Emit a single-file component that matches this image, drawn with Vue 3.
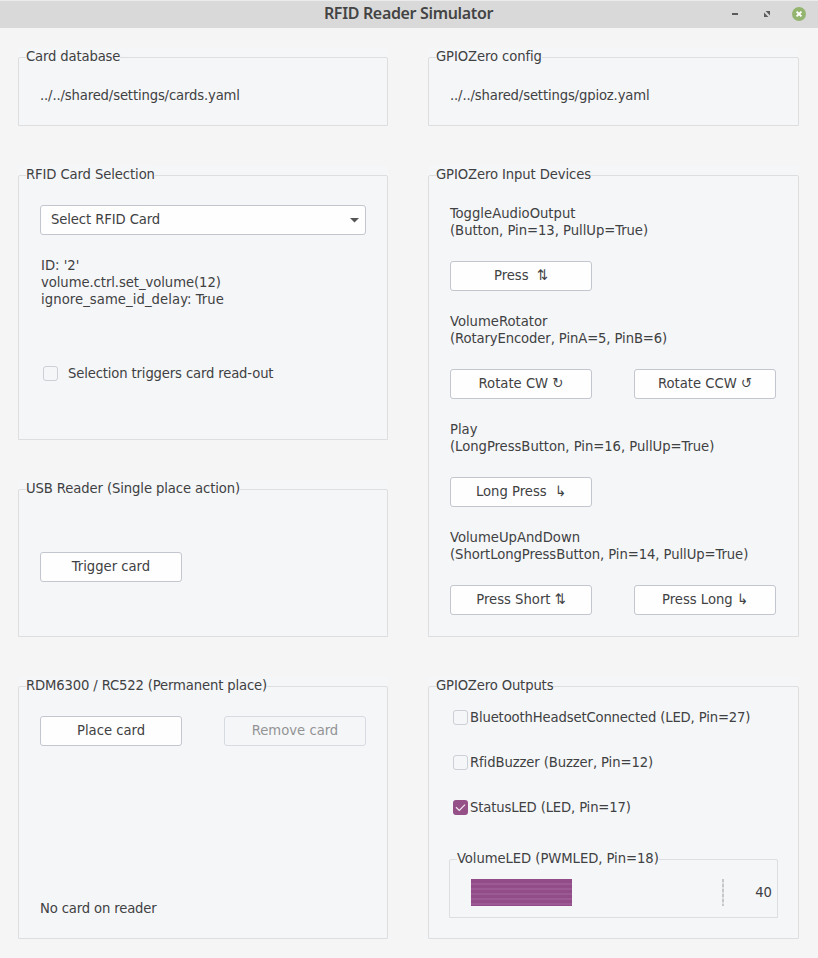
<script setup>
import { ref } from 'vue'

const devices = [
  { name: 'ToggleAudioOutput', info: '(Button, Pin=13, PullUp=True)', fit: 'slight', actions: ['Press  ⇅'] },
  { name: 'VolumeRotator', info: '(RotaryEncoder, PinA=5, PinB=6)', fit: 'tight', actions: ['Rotate CW ↻', 'Rotate CCW ↺'] },
  { name: 'Play', info: '(LongPressButton, Pin=16, PullUp=True)', fit: 'slight', actions: ['Long Press  ↳'] },
  { name: 'VolumeUpAndDown', info: '(ShortLongPressButton, Pin=14, PullUp=True)', fit: 'snug', actions: ['Press Short ⇅', 'Press Long ↳'] },
]
const outputs = ref([
  { label: 'BluetoothHeadsetConnected (LED, Pin=27)', fit: 'tighter', on: false },
  { label: 'RfidBuzzer (Buzzer, Pin=12)', fit: 'tight', on: false },
  { label: 'StatusLED (LED, Pin=17)', fit: 'tighter', on: true },
])
const level = ref(40)
</script>

<template>
  <div class="window">
    <header class="titlebar">
      <span class="side"></span>
      <h1 class="title">RFID Reader Simulator</h1>
      <div class="side controls">
        <svg width="14" height="14" viewBox="0 0 14 14"><rect x="4" y="6" width="6" height="2" fill="#5b5b5b" /></svg>
        <svg width="14" height="14" viewBox="0 0 14 14"><path d="M5.6 4H10V8.4ZM4 5.6V10H8.4Z" fill="#5b5b5b" /></svg>
        <svg width="14" height="14" viewBox="0 0 14 14"><circle cx="7" cy="7" r="7" fill="#93b56f" /><path d="M4.6 4.6L9.4 9.4M9.4 4.6L4.6 9.4" stroke="#fff" stroke-width="2" /></svg>
      </div>
    </header>

    <main class="content">
      <div class="column left">
        <section class="group path">
          <div class="frame"><span class="legend tighter">Card database</span><p class="tighter">../../shared/settings/cards.yaml</p></div>
        </section>

        <section class="group selection">
          <div class="frame">
            <span class="legend tight">RFID Card Selection</span>
            <div class="select">
              <span class="tight">Select RFID Card</span>
              <svg width="9" height="5" viewBox="0 0 9 5"><path d="M0 0H9L4.5 4.6Z" fill="#555" /></svg>
            </div>
            <p class="details">ID: '2'<br /><span class="snug">volume.ctrl.set_volume(12)</span><br /><span class="wide">ignore_same_id_delay: True</span></p>
            <div class="check spaced"><span class="box"></span><span class="tighter">Selection triggers card read-out</span></div>
          </div>
        </section>

        <section class="group usb">
          <div class="frame">
            <span class="legend tight">USB Reader (Single place action)</span>
            <button class="btn" type="button"><span>Trigger card</span></button>
          </div>
        </section>

        <section class="group permanent">
          <div class="frame">
            <span class="legend tighter">RDM6300 / RC522 (Permanent place)</span>
            <div class="row">
              <button class="btn" type="button"><span>Place card</span></button>
              <button class="btn" type="button" disabled><span>Remove card</span></button>
            </div>
            <p class="status tighter">No card on reader</p>
          </div>
        </section>
      </div>

      <div class="column right">
        <section class="group path">
          <div class="frame"><span class="legend tight">GPIOZero config</span><p class="tighter">../../shared/settings/gpioz.yaml</p></div>
        </section>

        <section class="group inputs">
          <div class="frame">
            <span class="legend tight">GPIOZero Input Devices</span>
            <div v-for="d in devices" :key="d.name" class="device">
              <p>{{ d.name }}<br /><span :class="d.fit">{{ d.info }}</span></p>
              <div class="row">
                <button v-for="a in d.actions" :key="a" class="btn" type="button"><span>{{ a }}</span></button>
              </div>
            </div>
          </div>
        </section>

        <section class="group outputs">
          <div class="frame">
            <span class="legend tighter">GPIOZero Outputs</span>
            <div v-for="o in outputs" :key="o.label" class="check">
              <span class="box" :class="{ on: o.on }">
                <svg v-if="o.on" width="15" height="15" viewBox="0 0 15 15"><path d="M3 7.3L6.3 10.5L12 4.7" fill="none" stroke="#f3e9f1" stroke-width="1.2" /></svg>
              </span>
              <span :class="o.fit">{{ o.label }}</span>
            </div>
            <div class="frame inner">
              <span class="legend snug">VolumeLED (PWMLED, Pin=18)</span>
              <div class="meter"><div class="bar" :style="{ width: level + '%' }"></div></div>
              <span class="value">{{ level }}</span>
            </div>
          </div>
        </section>
      </div>
    </main>
  </div>
</template>

<style>
body { margin: 0; background: #f5f5f5; }
</style>

<style scoped>
* { box-sizing: border-box; }
.window {
  width: 818px; height: 958px; display: flex; flex-direction: column; overflow: hidden;
  background: #f5f5f5; color: #404142;
  font-family: "DejaVu Sans Condensed", "DejaVu Sans", sans-serif;
  font-stretch: condensed; font-size: 14.67px; line-height: 17px; white-space: pre;
}
p { margin: -1px 0 1px; }
svg { display: block; flex: none; }
.slight { letter-spacing: -0.03px; }
.snug { letter-spacing: -0.06px; }
.tight { letter-spacing: -0.1px; }
.tighter { letter-spacing: -0.14px; }
.wide { letter-spacing: 0.08px; }
.titlebar {
  height: 28px; display: flex; align-items: center; justify-content: space-between;
  background: #d9d9d9; box-shadow: inset 0 1px #ececec; flex: none;
}
.side { width: 100px; }
.title {
  margin: 0; padding: 0 1px 2px 0; color: #444;
  font: 600 16px/24px "Noto Sans", sans-serif; font-stretch: normal; letter-spacing: -0.34px;
}
.controls { display: flex; align-items: center; justify-content: flex-end; gap: 18px; padding-right: 12px; }
.content { flex: 1; display: flex; gap: 40px; padding: 20px 19px 19px 18px; }
.column { display: flex; flex-direction: column; gap: 40px; }
.left { width: 370px; }
.right { width: 371px; }
.group { display: flex; padding-top: 9px; background: #f5f6f8; }
.frame {
  flex: 1; min-width: 0; display: flex; flex-direction: column; align-items: flex-start;
  border: 1px solid #dcdee0; border-radius: 2px 2px 0 0; padding: 0 21px 21px;
}
.legend { flex: none; height: 17px; margin: -11px 0 23px -14px; background: #f5f6f8; }
.path { height: 78px; }
.selection { height: 274px; }
.usb { height: 157px; }
.inputs { height: 471px; }
.permanent, .outputs { height: 262px; }
.usb .btn { margin-top: 33px; }

.select, .btn {
  height: 30px; border: 1px solid #c3c6cf; border-radius: 3px; background: #fefefe;
  color: inherit; font: inherit; font-stretch: inherit; white-space: pre;
}
.select {
  align-self: stretch; display: flex; align-items: center; justify-content: space-between;
  padding: 0 6px 3px 10px;
}
.select svg { margin-top: 4px; }
.btn { width: 142px; padding: 0 0 3px; text-align: center; }
.btn:disabled { background: #f5f6f8; border-color: #d7dae0; color: #929395; }
.row { display: flex; gap: 42px; }
.details { margin: 21px 0 0 1px; }
.check { display: flex; align-items: center; height: 17px; gap: 2px; margin-left: 3px; }
.check.spaced { margin-top: 57px; gap: 10px; }
.box { width: 15px; height: 15px; border: 1px solid #cdcfd6; border-radius: 3px; margin-top: 1px; flex: none; }
.box.on { border: 0; background: #965088; }
.status { margin: auto 0 1px; }
.device { display: flex; flex-direction: column; gap: 22px; margin-bottom: 22px; }

.outputs .frame > .check { margin-bottom: 28px; }
.outputs > .frame > .legend { margin-bottom: 15px; }
.frame.inner {
  flex: none; width: 329px; height: 59px; margin: 16px 0 0 -1px; padding: 0 5px 0 21px;
  display: grid; grid-template-columns: 253px 1fr; grid-template-rows: 17px 27px; row-gap: 2px;
}
.inner .legend { grid-column: 1 / 3; justify-self: start; margin: -11px 0 0 -14px; }
.meter { height: 27px; background: repeating-linear-gradient(#c5c7c9 0 3px, #dfe1e3 3px 5px) right / 2px 100% no-repeat; }
.bar { height: 27px; background: repeating-linear-gradient(#924c88 0 3px, #9c5a94 3px 5px) 0 1px #924c88; }
.value { justify-self: end; align-self: center; padding-bottom: 2px; }
</style>
